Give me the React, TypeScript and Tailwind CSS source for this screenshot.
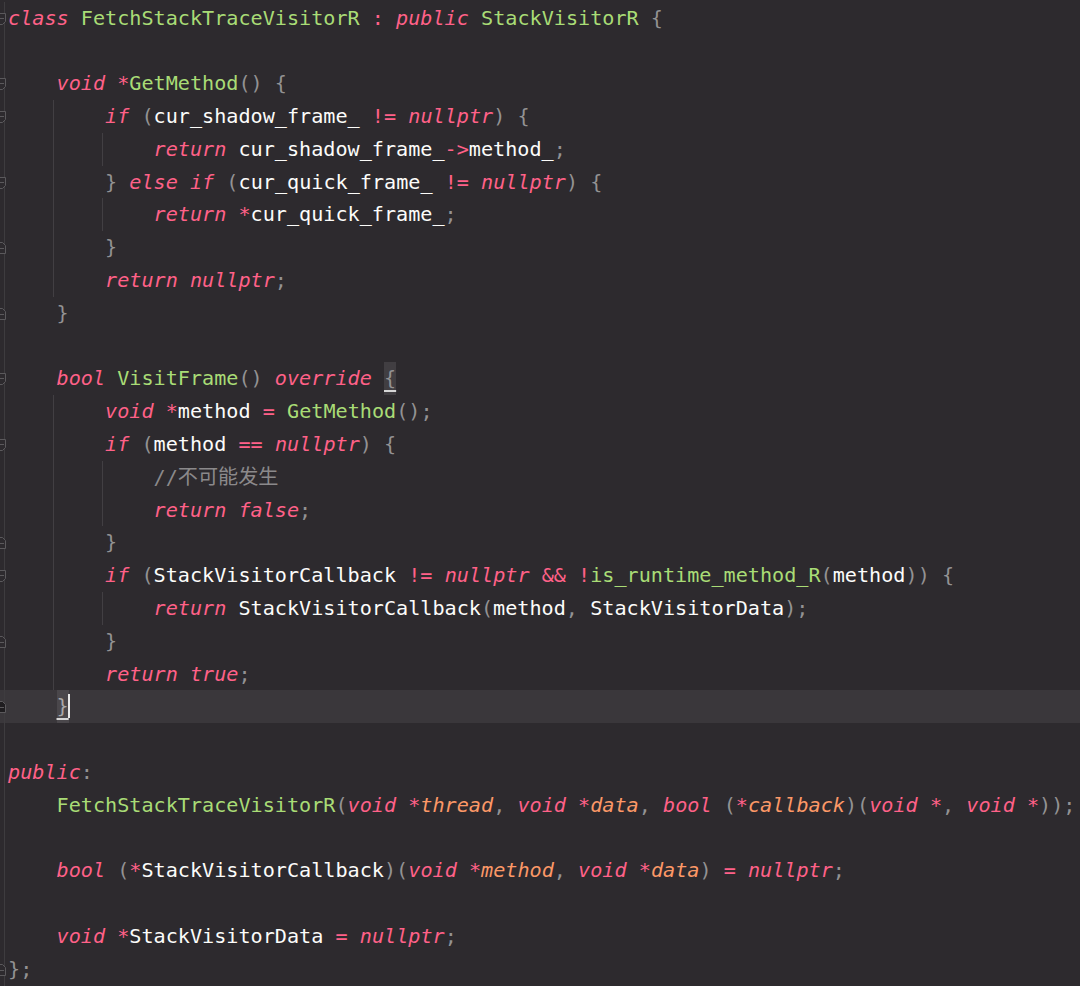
import React from "react";

type Tok = [string, string];
type Row = {
  indent?: number;
  toks: Tok[];
  guides?: number[];
  fold?: "open" | "close";
  hl?: boolean;
};

const CLS: Record<string, string> = {
  k: "text-[#ff6188] italic",
  o: "text-[#ff6188]",
  f: "text-[#a9dc76]",
  w: "text-[#fcfcfa]",
  p: "text-[#939293]",
  a: "text-[#fc9867] italic",
  c: "text-[#8b898b]",
  _: "",
};

const S: Tok = ["_", " "];

const rows: Row[] = [
  {
    fold: "open",
    toks: [["k", "class"], S, ["f", "FetchStackTraceVisitorR"], S, ["o", ":"], S, ["k", "public"], S, ["f", "StackVisitorR"], S, ["p", "{"]],
  },
  { toks: [] },
  {
    indent: 1,
    fold: "open",
    toks: [["k", "void"], S, ["o", "*"], ["f", "GetMethod"], ["p", "()"], S, ["p", "{"]],
  },
  {
    indent: 2,
    fold: "open",
    guides: [53],
    toks: [["k", "if"], S, ["p", "("], ["w", "cur_shadow_frame_"], S, ["o", "!="], S, ["k", "nullptr"], ["p", ")"], S, ["p", "{"]],
  },
  {
    indent: 3,
    guides: [53, 102],
    toks: [["k", "return"], S, ["w", "cur_shadow_frame_"], ["o", "->"], ["w", "method_"], ["p", ";"]],
  },
  {
    indent: 2,
    fold: "open",
    guides: [53],
    toks: [["p", "}"], S, ["k", "else"], S, ["k", "if"], S, ["p", "("], ["w", "cur_quick_frame_"], S, ["o", "!="], S, ["k", "nullptr"], ["p", ")"], S, ["p", "{"]],
  },
  {
    indent: 3,
    guides: [53, 102],
    toks: [["k", "return"], S, ["o", "*"], ["w", "cur_quick_frame_"], ["p", ";"]],
  },
  { indent: 2, fold: "close", guides: [53], toks: [["p", "}"]] },
  { indent: 2, guides: [53], toks: [["k", "return"], S, ["k", "nullptr"], ["p", ";"]] },
  { indent: 1, fold: "close", toks: [["p", "}"]] },
  { toks: [] },
  {
    indent: 1,
    fold: "open",
    toks: [["k", "bool"], S, ["f", "VisitFrame"], ["p", "()"], S, ["k", "override"], S, ["m", "{"]],
  },
  {
    indent: 2,
    guides: [53],
    toks: [["k", "void"], S, ["o", "*"], ["w", "method"], S, ["o", "="], S, ["f", "GetMethod"], ["p", "()"], ["p", ";"]],
  },
  {
    indent: 2,
    fold: "open",
    guides: [53],
    toks: [["k", "if"], S, ["p", "("], ["w", "method"], S, ["o", "=="], S, ["k", "nullptr"], ["p", ")"], S, ["p", "{"]],
  },
  { indent: 3, guides: [53, 102], toks: [["c", "//不可能发生"]] },
  { indent: 3, guides: [53, 102], toks: [["k", "return"], S, ["k", "false"], ["p", ";"]] },
  { indent: 2, fold: "close", guides: [53], toks: [["p", "}"]] },
  {
    indent: 2,
    fold: "open",
    guides: [53],
    toks: [
      ["k", "if"], S, ["p", "("], ["w", "StackVisitorCallback"], S, ["o", "!="], S, ["k", "nullptr"], S, ["o", "&&"], S,
      ["o", "!"], ["f", "is_runtime_method_R"], ["p", "("], ["w", "method"], ["p", "))"], S, ["p", "{"],
    ],
  },
  {
    indent: 3,
    guides: [53, 102],
    toks: [["k", "return"], S, ["w", "StackVisitorCallback"], ["p", "("], ["w", "method"], ["p", ","], S, ["w", "StackVisitorData"], ["p", ");"]],
  },
  { indent: 2, fold: "close", guides: [53], toks: [["p", "}"]] },
  { indent: 2, guides: [53], toks: [["k", "return"], S, ["k", "true"], ["p", ";"]] },
  { indent: 1, fold: "close", hl: true, toks: [["n", "}"]] },
  { toks: [] },
  { toks: [["k", "public"], ["p", ":"]] },
  {
    indent: 1,
    toks: [
      ["f", "FetchStackTraceVisitorR"], ["p", "("], ["k", "void"], S, ["o", "*"], ["a", "thread"], ["p", ","], S,
      ["k", "void"], S, ["o", "*"], ["a", "data"], ["p", ","], S, ["k", "bool"], S, ["p", "("], ["o", "*"], ["a", "callback"],
      ["p", ")"], ["p", "("], ["k", "void"], S, ["o", "*"], ["p", ","], S, ["k", "void"], S, ["o", "*"], ["p", "));"],
    ],
  },
  { toks: [] },
  {
    indent: 1,
    toks: [
      ["k", "bool"], S, ["p", "("], ["o", "*"], ["w", "StackVisitorCallback"], ["p", ")"], ["p", "("], ["k", "void"], S, ["o", "*"],
      ["a", "method"], ["p", ","], S, ["k", "void"], S, ["o", "*"], ["a", "data"], ["p", ")"], S, ["o", "="], S, ["k", "nullptr"], ["p", ";"],
    ],
  },
  { toks: [] },
  {
    indent: 1,
    toks: [["k", "void"], S, ["o", "*"], ["w", "StackVisitorData"], S, ["o", "="], S, ["k", "nullptr"], ["p", ";"]],
  },
  { fold: "close", toks: [["p", "};"]] },
];

function Gutter({ fold, hl }: { fold?: "open" | "close"; hl?: boolean }) {
  const fill = hl ? "#1f1d20" : "#2d2a2e";
  return (
    <svg width="8" height="33" viewBox="0 0 8 33" className="shrink-0 block">
      <line x1="4.5" y1="0" x2="4.5" y2="33" stroke="#3e3c3f" strokeWidth="1" />
      {fold === "open" && (
        <g>
          <path d="M-1 11.5 H5.5 V19.5 L2.5 22.5 H-1 Z" fill={fill} stroke="#5b595c" strokeWidth="1" />
          <path d="M0 16.5 H4" stroke="#5b595c" strokeWidth="1" />
        </g>
      )}
      {fold === "close" && (
        <g>
          <path d="M-1 22.5 H5.5 V14.5 L2.5 11.5 H-1 Z" fill={fill} stroke="#5b595c" strokeWidth="1" />
          <path d="M0 17.5 H4" stroke="#5b595c" strokeWidth="1" />
        </g>
      )}
    </svg>
  );
}

function Token({ t }: { t: Tok }) {
  const [kind, text] = t;
  if (kind === "m") {
    return (
      <span className="inline-block bg-[#413e42] text-[#939293] underline decoration-[#d6d6d6] decoration-2 underline-offset-[5px] leading-[32.8px]">
        {text}
      </span>
    );
  }
  if (kind === "n") {
    return (
      <span className="relative inline-block bg-[#4a474b] text-[#a9a8a9] underline decoration-[#d6d6d6] decoration-2 underline-offset-[5px] leading-[32.8px]">
        {text}
        <span className="absolute right-[-1px] top-[4px] h-[24px] w-[2px] bg-[#e8e8e8]" />
      </span>
    );
  }
  return <span className={CLS[kind]}>{text}</span>;
}

export default function App() {
  return (
    <div className="w-[1080px] h-[986px] overflow-hidden bg-[#2d2a2e] pt-[1.6px] font-['DejaVu_Sans_Mono','Noto_Sans_CJK_SC',monospace] text-[20.15px]">
      {rows.map((r, i) => (
        <div
          key={i}
          className={`relative flex h-[32.8px] items-stretch ${r.hl ? "bg-[#3a373b]" : ""}`}
        >
          <Gutter fold={r.fold} hl={r.hl} />
          {(r.guides ?? []).map((g) => (
            <div
              key={g}
              className={`absolute top-0 h-full w-px bg-[#423f43] ${g === 53 ? "left-[53px]" : "left-[102px]"}`}
            />
          ))}
          <div className="whitespace-pre leading-[32.8px] text-[#fcfcfa]">
            {"    ".repeat(r.indent ?? 0)}
            {r.toks.map((t, j) => (
              <Token key={j} t={t} />
            ))}
          </div>
        </div>
      ))}
    </div>
  );
}
